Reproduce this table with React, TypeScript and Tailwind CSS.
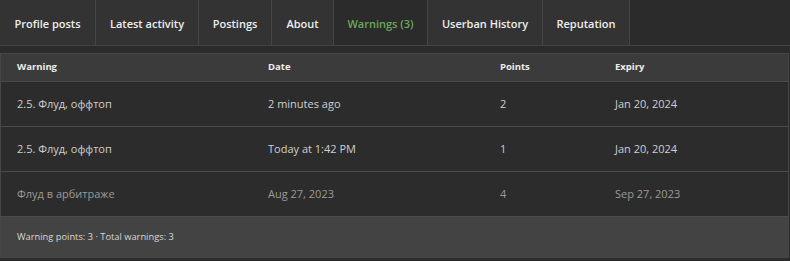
const tabs = [
  { label: 'Profile posts', w: 'w-[96px]' },
  { label: 'Latest activity', w: 'w-[103px]' },
  { label: 'Postings', w: 'w-[73px]' },
  { label: 'About', w: 'w-[62px]' },
  { label: 'Warnings (3)', w: 'w-[94px]' },
  { label: 'Userban History', w: 'w-[115px]' },
  { label: 'Reputation', w: 'w-[87px]' },
]

const rows = [
  { warning: '2.5. Флуд, оффтоп', date: '2 minutes ago', points: '2', expiry: 'Jan 20, 2024', dim: false },
  { warning: '2.5. Флуд, оффтоп', date: 'Today at 1:42 PM', points: '1', expiry: 'Jan 20, 2024', dim: false },
  { warning: 'Флуд в арбитраже', date: 'Aug 27, 2023', points: '4', expiry: 'Sep 27, 2023', dim: true },
]

const cols = 'grid grid-cols-[251px_232px_115px_1fr]'

export default function App() {
  return (
    <div className="h-[261px] w-[790px] bg-[#2b2b2b] font-['Open_Sans','Noto_Sans',sans-serif]">
      <div className="flex h-[46px] border-b border-[#444]">
        {tabs.map((t) => {
          const active = t.label === 'Warnings (3)'
          return (
            <div
              key={t.label}
              className={
                active
                  ? `${t.w} flex items-center justify-center border-r border-[#454545] bg-[#2b2b2b] pt-[3px] text-[11px] font-semibold text-[#6ca85c]`
                  : `${t.w} flex items-center justify-center border-r border-[#454545] bg-[#333] pt-[3px] text-[11px] font-semibold text-[#eee]`
              }
            >
              {t.label}
            </div>
          )
        })}
      </div>
      <div className="mt-[7px] mr-[1px] border border-[#474747] bg-[#2c2c2c]">
        <div className={`${cols} h-[28px] items-center border-b border-[#4a4a4a] bg-[#3b3b3b] px-4 text-[9.5px] font-bold text-[#eee]`}>
          <span>Warning</span>
          <span>Date</span>
          <span>Points</span>
          <span>Expiry</span>
        </div>
        {rows.map((r, i) => (
          <div
            key={i}
            className={`${cols} h-[45px] items-center border-b border-[#4a4a4a] px-4 text-[11px] ${r.dim ? 'text-[#9a9a9a]' : 'text-[#cfcfcf]'}`}
          >
            <span>{r.warning}</span>
            <span>{r.date}</span>
            <span>{r.points}</span>
            <span>{r.expiry}</span>
          </div>
        ))}
        <div className="flex h-[40px] items-center bg-[#434343] px-4 text-[9.3px] text-[#d8d8d8]">
          Warning points: 3 · Total warnings: 3
        </div>
      </div>
    </div>
  )
}
